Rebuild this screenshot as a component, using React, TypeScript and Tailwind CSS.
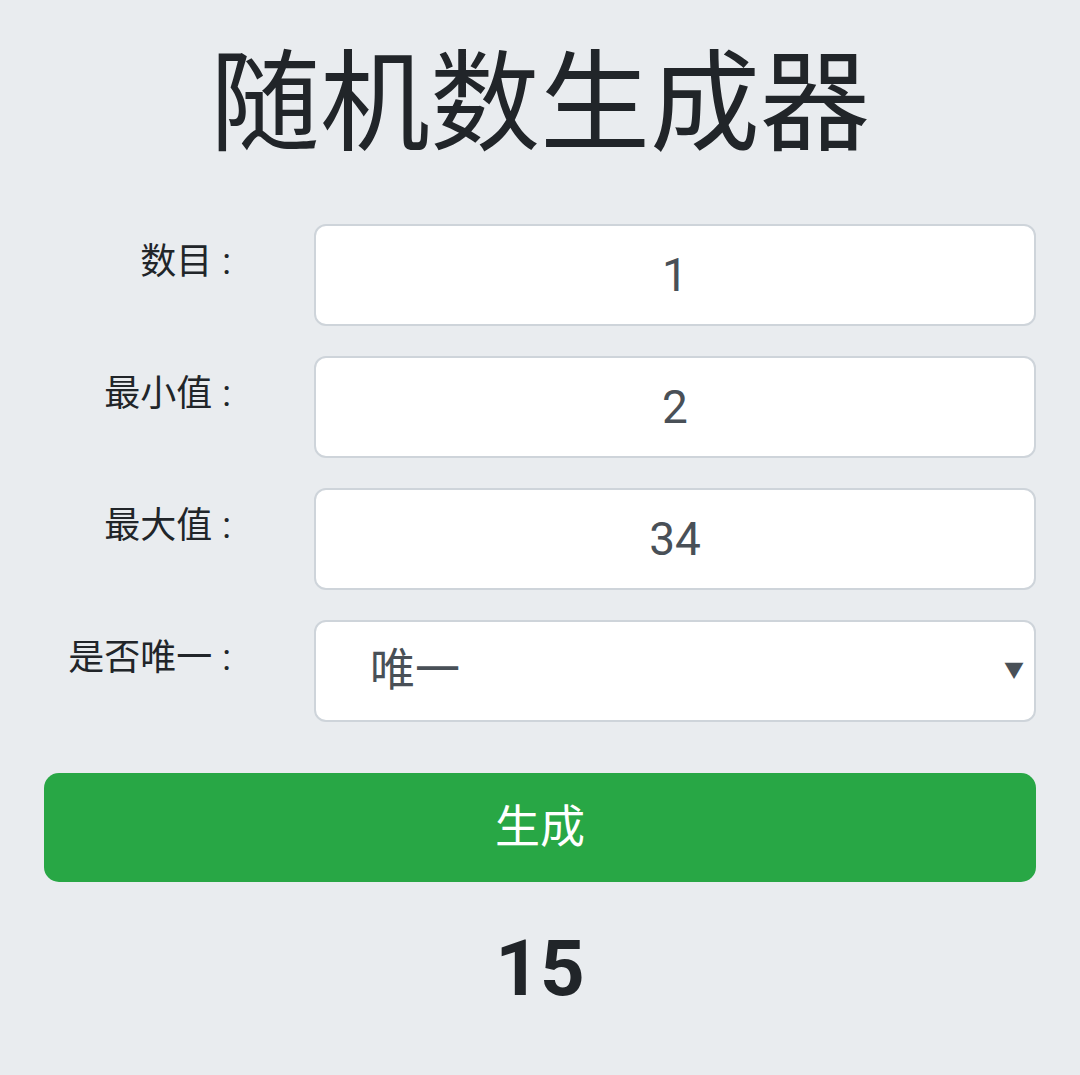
import { useState } from 'react';

const fontStack = '"Roboto", "Noto Sans CJK SC", sans-serif';

const fields = [
  { label: '数目', value: '1' },
  { label: '最小值', value: '2' },
  { label: '最大值', value: '34' },
];

function FieldLabel({ text }: { text: string }) {
  return (
    <label className="w-[187px] shrink-0 pt-[12px] text-right text-[36px] leading-[52px]">
      {text}
      <span className="ml-[10px]">:</span>
    </label>
  );
}

export default function App() {
  const [unique, setUnique] = useState('唯一');

  return (
    <div
      className="min-h-[1075px] w-full bg-[#e9ecef] px-[44px] pt-[39px] text-[#212529]"
      style={{ fontFamily: fontStack }}
    >
      <h1 className="text-center text-[110px] font-normal leading-[132px]">随机数生成器</h1>

      <form className="mt-[53px] flex flex-col gap-[30px]" onSubmit={(e) => e.preventDefault()}>
        {fields.map((f) => (
          <div key={f.label} className="flex items-start">
            <FieldLabel text={f.label} />
            <input
              type="text"
              defaultValue={f.value}
              className="ml-[83px] h-[102px] flex-1 rounded-[12px] border-2 border-[#ced4da] bg-white text-center text-[46px] text-[#495057] outline-none"
            />
          </div>
        ))}
        <div className="flex items-start">
          <FieldLabel text="是否唯一" />
          <div className="relative ml-[83px] h-[102px] flex-1">
            <select
              value={unique}
              onChange={(e) => setUnique(e.target.value)}
              className="h-full w-full appearance-none rounded-[12px] border-2 border-[#ced4da] bg-white pl-[54px] text-[45px] text-[#495057] outline-none"
            >
              <option value="唯一">唯一</option>
              <option value="不唯一">不唯一</option>
            </select>
            <span className="pointer-events-none absolute right-[12px] top-1/2 -translate-y-1/2 text-[20px] text-[#495057]">
              ▼
            </span>
          </div>
        </div>

        <button
          type="submit"
          className="mt-[21px] h-[109px] w-full rounded-[15px] bg-[#28a745] text-[45px] text-white"
        >
          生成
        </button>
      </form>

      <div className="mt-[40px] text-center text-[78px] font-bold leading-[94px]">15</div>
    </div>
  );
}
